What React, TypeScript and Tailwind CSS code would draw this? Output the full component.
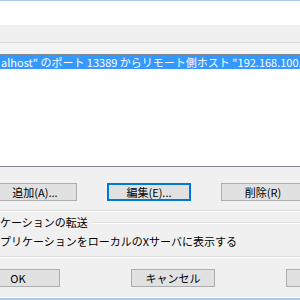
import React from "react";

function Btn({ label, def = false, className = "" }: { label: string; def?: boolean; className?: string }) {
  return (
    <div
      className={
        "w-[84px] h-[18px] shrink-0 flex items-center justify-center bg-[#e1e1e1] text-black " +
        (def ? "border-2 border-[#0078d7] " : "border border-[#adadad] ") +
        className
      }
    >
      <span className="leading-none">{label}</span>
    </div>
  );
}

function Etched() {
  return (
    <div className="flex flex-col">
      <div className="h-px bg-[#dcdcdc]" />
      <div className="h-px bg-white" />
    </div>
  );
}

export default function App() {
  return (
    <div className="w-[300px] h-[300px] overflow-hidden bg-[#f0f0f0] flex flex-col text-[11px] text-black font-['Noto_Sans_CJK_JP','Noto_Sans',sans-serif]">
      <div className="h-px bg-[#a9cbee] shrink-0" />
      <div className="h-[24px] bg-white shrink-0" />
      <div className="h-[17px] bg-[#f0f0f0] shrink-0" />
      <div className="h-px bg-[#dadada] shrink-0" />
      <div className="h-[11px] bg-[#f3f3f3] shrink-0" />
      <div className="h-[113px] shrink-0 bg-white border-y border-[#828790] overflow-hidden">
        <div className="h-[14px] bg-[#3399ff] text-white whitespace-nowrap leading-[14px] pl-px">
          alhost" のポート 13389 からリモート側ホスト "192.168.100.10" のポート 3389 へ
        </div>
      </div>
      <div className="h-[16px] shrink-0" />
      <div className="h-[18px] shrink-0 flex gap-[30px] ml-[-7px]">
        <Btn label="追加(A)..." />
        <Btn label="編集(E)..." def />
        <Btn label="削除(R)" />
      </div>
      <div className="h-[9px] shrink-0" />
      <Etched />
      <div className="h-[4px] shrink-0" />
      <div className="h-[13px] shrink-0 flex items-center gap-[3px]">
        <span className="whitespace-nowrap leading-none">ケーションの転送</span>
        <div className="flex-1">
          <Etched />
        </div>
      </div>
      <div className="h-[6px] shrink-0" />
      <div className="h-[13px] shrink-0 flex items-center whitespace-nowrap">
        <span className="leading-none">プリケーションをローカルのXサーバに表示する</span>
      </div>
      <div className="h-[8px] shrink-0" />
      <Etched />
      <div className="h-[11px] shrink-0" />
      <div className="h-[18px] shrink-0 flex gap-[71px] ml-[-24px]">
        <Btn label="OK" />
        <Btn label="キャンセル" />
        <Btn label="ヘルプ(H)" />
      </div>
      <div className="h-[10px] shrink-0" />
      <div className="h-px bg-white shrink-0" />
      <div className="flex-1 bg-[#a9cbee]" />
    </div>
  );
}
